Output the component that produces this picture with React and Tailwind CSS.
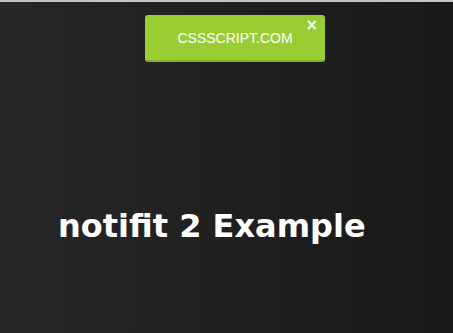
import React from 'react';

const App = () => {
    return (
        <div className="w-[453px] h-[333px] border-t-2 border-[#c4c4c4] bg-gradient-to-r from-[#272727] to-[#191919] overflow-hidden relative">
            {/* Toast */}
            <div className="flex pl-[145px] pt-[13px]">
                <div className="relative w-[180px] h-[47px] rounded-[3px] bg-[#9acd32] border-b-2 border-[#83b12a] flex items-center justify-center">
                    <span className="text-[14px] text-white font-['Liberation_Sans',Arial,sans-serif] pt-[1px]">
                        CSSSCRIPT.COM
                    </span>
                    <span className="absolute right-[7px] top-[3px] text-white text-[15px] font-bold leading-none font-['DejaVu_Sans',sans-serif]">
                        ×
                    </span>
                </div>
            </div>

            {/* Heading */}
            <h1 className="mt-[148px] pl-[58px] text-[32px] leading-none font-bold text-white font-['DejaVu_Sans',Verdana,sans-serif]">
                notifit 2 Example
            </h1>
        </div>
    );
};

export default App;
